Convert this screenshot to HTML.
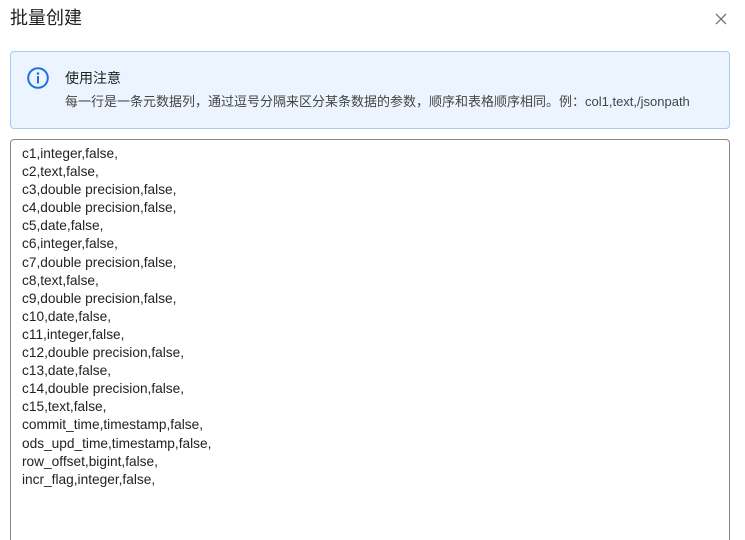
<!DOCTYPE html>
<html><head><meta charset="utf-8"><style>
html,body{margin:0;padding:0;background:#fff;width:745px;height:533px;overflow:hidden;font-family:"Liberation Sans","Noto Sans CJK SC",sans-serif;}
.title{position:absolute;left:10px;top:6px;font-size:18px;color:#222;line-height:24px;}
.close{position:absolute;left:714px;top:12px;}
.alert{position:absolute;left:10px;top:51px;width:718px;height:76px;background:#ecf5ff;border:1px solid #a3cbf7;border-radius:4px;}
.icon{position:absolute;left:16px;top:15px;}
.h{position:absolute;left:54px;top:16px;font-size:14px;color:#222;line-height:20px;}
.d{position:absolute;left:54px;top:41px;font-size:13px;color:#444;line-height:18px;white-space:nowrap;}
.ta{position:absolute;left:10px;top:139px;width:718px;height:400px;border:1px solid #888;border-bottom:none;border-radius:4px 4px 0 0;}
.ta pre{margin:0;position:absolute;left:11px;top:5px;font-family:"Liberation Sans",sans-serif;font-size:13.7px;line-height:18.1px;color:#222;}
</style></head><body>
<div class="title">批量创建</div>
<svg class="close" width="14" height="14" viewBox="0 0 14 14"><path d="M2 2L12 12M12 2L2 12" stroke="#777" stroke-width="1.3"/></svg>
<div class="alert">
<svg class="icon" width="22" height="22" viewBox="0 0 22 22"><circle cx="11" cy="11" r="9.8" fill="none" stroke="#1f6fe5" stroke-width="2"/><circle cx="11" cy="6.5" r="1.3" fill="#1f6fe5"/><rect x="10" y="9" width="2" height="7.5" fill="#1f6fe5"/></svg>
<div class="h">使用注意</div>
<div class="d">每一行是一条元数据列，通过逗号分隔来区分某条数据的参数，顺序和表格顺序相同。例：col1,text,/jsonpath</div>
</div>
<div class="ta"><pre>c1,integer,false,
c2,text,false,
c3,double precision,false,
c4,double precision,false,
c5,date,false,
c6,integer,false,
c7,double precision,false,
c8,text,false,
c9,double precision,false,
c10,date,false,
c11,integer,false,
c12,double precision,false,
c13,date,false,
c14,double precision,false,
c15,text,false,
commit_time,timestamp,false,
ods_upd_time,timestamp,false,
row_offset,bigint,false,
incr_flag,integer,false,</pre></div>
</body></html>
